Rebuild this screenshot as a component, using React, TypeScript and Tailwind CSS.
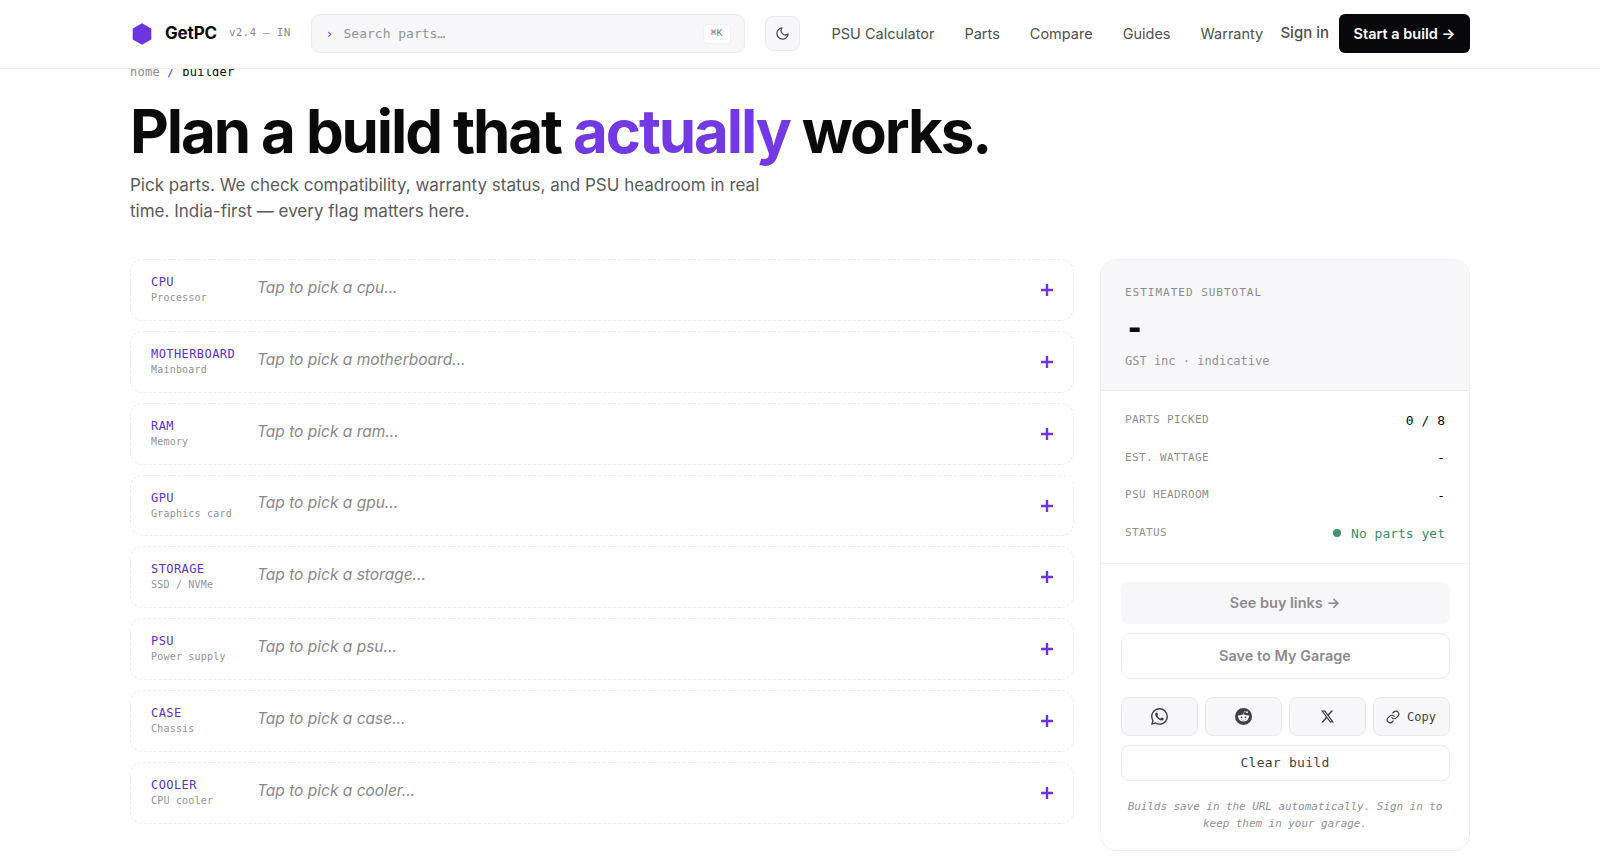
import { ArrowRight } from 'lucide-react';
import { BsReddit, BsTwitterX, BsWhatsapp, BsLink45Deg } from 'react-icons/bs';
import { FiLink, FiMoon } from 'react-icons/fi';

const NAV_LINKS = ['PSU Calculator', 'Parts', 'Compare', 'Guides', 'Warranty'];

const SLOTS = [
  { key: 'cpu', label: 'Processor' },
  { key: 'motherboard', label: 'Mainboard' },
  { key: 'ram', label: 'Memory' },
  { key: 'gpu', label: 'Graphics card' },
  { key: 'storage', label: 'SSD / NVMe' },
  { key: 'psu', label: 'Power supply' },
  { key: 'case', label: 'Chassis' },
  { key: 'cooler', label: 'CPU cooler' },
];

const STATS = [
  { label: 'Parts picked', value: '0 / 8' },
  { label: 'Est. wattage', value: '-' },
  { label: 'PSU headroom', value: '-' },
];

function Header() {
  return (
    <header className="sticky top-0 z-10 h-[69px] bg-white border-b border-[#ececee]">
      <div className="w-[1340px] h-[67px] mx-auto flex items-center">
        <svg className="w-6 h-6 shrink-0" viewBox="0 0 24 24" fill="#6d35e0">
          <path d="M12 1.2L21.3 6.6V17.4L12 22.8L2.7 17.4V6.6Z" />
        </svg>
        <span className="ml-[11px] text-[17px] font-bold tracking-[-0.01em] text-[#0a0a0b]">GetPC</span>
        <span className="ml-3 font-['DejaVu_Sans_Mono',monospace] text-[11px] tracking-[0.02em] text-[#8c8c8f]">v2.4 — IN</span>
        <div className="ml-5 w-[434px] h-[39px] shrink-0 rounded-[9px] border border-[#ebebed] bg-[#f7f7f9] flex items-center pl-[14px] pr-[13px] font-['DejaVu_Sans_Mono',monospace] text-[13px] text-[#929296]">
          <span className="w-[18px] text-[#6d35e0]">›</span>
          <span>Search parts…</span>
          <kbd className="ml-auto w-7 h-5 rounded-[4px] bg-white border border-[#f1f1f3] flex items-center justify-center text-[10px] text-[#77777a]">⌘K</kbd>
        </div>
        <button className="ml-5 w-[35px] h-[35px] shrink-0 rounded-[8px] border border-[#ebebed] bg-[#f7f7f9] flex items-center justify-center text-[#4b4b4e]">
          <FiMoon className="w-[15px] h-[15px]" />
        </button>
        <nav className="ml-8 flex items-center gap-[30px] text-[14.5px] text-[#4f4f52]">
          {NAV_LINKS.map((l) => (
            <a key={l}>{l}</a>
          ))}
        </nav>
        <a className="ml-auto text-[15px] font-medium text-[#4f4f52]">Sign in</a>
        <button className="ml-[10px] w-[131px] h-[39px] shrink-0 rounded-[6px] bg-[#08080b] text-[14.5px] font-semibold text-white flex items-center justify-center whitespace-nowrap">
          Start a build →
        </button>
      </div>
    </header>
  );
}

function SlotRow({ name, label }: { name: string; label: string }) {
  return (
    <div className="h-[61.86px] rounded-[13px] border border-dashed border-[#ebebed] px-[20px] flex items-center">
      <div className="w-[106px] font-['DejaVu_Sans_Mono',monospace]">
        <div className="text-[12px] leading-[16px] tracking-[0.035em] font-medium uppercase text-[#5b2fd0]">{name}</div>
        <div className="text-[10px] leading-[16px] tracking-[0.02em] text-[#929296]">{label}</div>
      </div>
      <div className="text-[15.5px] italic text-[#88888b] -mt-[5px]">Tap to pick a {name}...</div>
      <svg className="ml-auto w-3 h-3" viewBox="0 0 12 12" stroke="#6d35e0" strokeWidth="2.4">
        <path d="M6 0V12M0 6H12" />
      </svg>
    </div>
  );
}

function Summary() {
  const share = 'h-[39px] rounded-[8px] border border-[#e8e8ea] bg-[#f7f7f9] flex items-center justify-center text-[#3f3f42]';
  return (
    <aside className="w-[370px] h-[592px] rounded-[16px] border border-[#f0f0f2] overflow-hidden font-['DejaVu_Sans_Mono',monospace]">
      <div className="h-[131px] bg-[#f7f7f9] border-b border-[#ececee] px-6 pt-[25px]">
        <div className="text-[11px] leading-[16px] tracking-[0.09em] text-[#8c8c8f]">ESTIMATED SUBTOTAL</div>
        <div className="mt-[7px] text-[32px] leading-[40px] font-bold text-[#0a0a0b]">-</div>
        <div className="mt-[5px] text-[12px] leading-[16px] text-[#929296]">GST inc · indicative</div>
      </div>
      <div className="h-[173px] border-b border-[#f0f0f2] px-6 pt-[10.5px]">
        {STATS.map((s) => (
          <div key={s.label} className="h-[37.7px] flex items-center justify-between">
            <span className="text-[11px] tracking-[0.035em] uppercase text-[#8f8f92]">{s.label}</span>
            <span className="text-[13px] text-[#0a0a0b]">{s.value}</span>
          </div>
        ))}
        <div className="h-[37.7px] flex items-center justify-between">
          <span className="text-[11px] tracking-[0.035em] text-[#8f8f92]">STATUS</span>
          <span className="text-[13px] text-[#3a8f64] flex items-center gap-[10px]">
            <i className="w-2 h-2 rounded-full bg-[#3f956b]" />
            No parts yet
          </span>
        </div>
      </div>
      <div className="px-[19.5px] pt-[18px]">
        <button className="w-full h-[42px] rounded-[8px] bg-[#f7f7f9] font-[Inter,sans-serif] text-[14.5px] font-semibold text-[#8c8c8f]">
          See buy links →
        </button>
        <button className="mt-[9px] w-full h-[46px] rounded-[10px] border border-[#ececee] font-[Inter,sans-serif] text-[14.5px] font-semibold text-[#8c8c8f] block">
          Save to My Garage
        </button>
        <div className="mt-[18px] grid grid-cols-4 gap-[7px]">
          <button className={share}><BsWhatsapp className="w-[17px] h-[17px]" /></button>
          <button className={share}><BsReddit className="w-[17px] h-[17px]" /></button>
          <button className={share}><BsTwitterX className="w-[13px] h-[13px]" /></button>
          <button className={share}>
            <FiLink className="w-[14px] h-[14px]" />
            <span className="ml-[7px] text-[12px]">Copy</span>
          </button>
        </div>
        <button className="mt-[9px] w-full h-[36px] rounded-[8px] border border-[#ececee] text-[13px] tracking-[0.02em] text-[#3f3f42] block">
          Clear build
        </button>
        <p className="mt-[17px] text-[11px] leading-[17px] tracking-[-0.006em] italic text-center text-[#929296]">
          Builds save in the URL automatically. Sign in to<br />keep them in your garage.
        </p>
      </div>
    </aside>
  );
}

export default function App() {
  return (
    <div className="h-[866px] overflow-hidden bg-white font-[Inter,sans-serif] text-[#0a0a0b]">
      <Header />
      <main className="w-[1340px] mx-auto -mt-[6px]">
        <div className="font-['DejaVu_Sans_Mono',monospace] text-[12px] leading-[18px] tracking-[0.02em] text-[#8c8c8f]">
          home <span className="text-[#6d35e0]">/</span> <span className="text-[#0a0a0b]">builder</span>
        </div>
        <h1 className="mt-[19px] text-[60px] leading-[62px] font-bold tracking-[-0.035em] whitespace-nowrap">
          Plan a build that <span className="text-[#7239e5]">actually</span> works.
        </h1>
        <p className="mt-[11px] text-[17px] leading-[25.5px] text-[#5a5a5d]">
          Pick parts. We check compatibility, warranty status, and PSU headroom in real<br />
          time. India-first — every flag matters here.
        </p>
        <div className="mt-[35px] flex items-start justify-between">
          <div className="w-[944px] flex flex-col gap-[10px]">
            {SLOTS.map((s) => (
              <SlotRow key={s.key} name={s.key} label={s.label} />
            ))}
          </div>
          <Summary />
        </div>
      </main>
    </div>
  );
}
